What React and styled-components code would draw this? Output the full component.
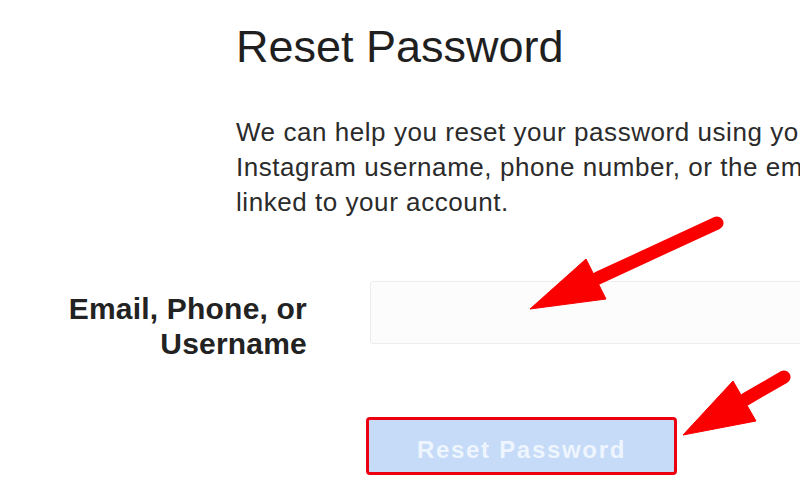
import React from 'react';
import styled, {createGlobalStyle} from 'styled-components';

const GlobalStyle = createGlobalStyle`
    html, body {
        margin: 0;
        padding: 0;
        background: #ffffff;
        overflow: hidden;
    }

    body {
        font-family: "Liberation Sans", Arial, Helvetica, sans-serif;
        color: #262626;
    }
`;

const Page = styled.div`
    position: relative;
    width: 800px;
    height: 489px;
    overflow: hidden;
    background: #ffffff;
`;

const Header = styled.header`
    margin-left: 236px;
    padding-top: 21px;
`;

const Title = styled.h1`
    margin: 0;
    font-size: 45px;
    font-weight: 400;
    line-height: 52px;
    color: #1f1f1f;
`;

const Intro = styled.p`
    margin: 42px 0 0;
    font-size: 26px;
    line-height: 35px;
    letter-spacing: 0.55px;
    white-space: nowrap;
    color: #2b2b2b;
`;

const Form = styled.form`
    margin-top: 61px;
    display: grid;
    grid-template-columns: 307px 480px;
    column-gap: 63px;
    row-gap: 59px;
    align-items: start;
`;

const Label = styled.label`
    margin-top: 10px;
    text-align: right;
    font-size: 30px;
    font-weight: 700;
    line-height: 35px;
    letter-spacing: 0.2px;
    color: #222222;
`;

const Input = styled.input`
    box-sizing: border-box;
    width: 100%;
    height: 63px;
    padding: 0 14px;
    border: 1px solid #ececec;
    border-radius: 3px;
    background: #fcfcfc;
    font: inherit;
    font-size: 24px;
    outline: none;
`;

const SubmitButton = styled.button`
    grid-column: 2;
    justify-self: start;
    margin-left: -1px;
    width: 305px;
    height: 52px;
    padding: 8px 0 0;
    border: none;
    border-radius: 1px;
    background: #c5dbf7;
    color: #eef5fe;
    font-family: "Liberation Sans", Arial, sans-serif;
    font-size: 24px;
    font-weight: 700;
    letter-spacing: 1.7px;
    outline: ${props => props.$highlight ? '3px solid #ec0010' : 'none'};
`;

const Annotations = styled.svg`
    position: absolute;
    left: 0;
    top: 0;
    pointer-events: none;
`;

const Arrow = ({tail, neck, tip, wingA, wingB}) => (
    <g fill="#fb0000" stroke="#fb0000">
        <line x1={tail[0]} y1={tail[1]} x2={neck[0]} y2={neck[1]}
              strokeWidth="13" strokeLinecap="round"/>
        <polygon points={`${tip.join(',')} ${wingA.join(',')} ${wingB.join(',')}`}
                 strokeWidth="1" strokeLinejoin="round"/>
    </g>
);

class App extends React.Component {
    render() {
        return (
            <Page>
                <GlobalStyle/>
                <Header>
                    <Title>Reset Password</Title>
                    <Intro>
                        We can help you reset your password using your<br/>
                        Instagram username, phone number, or the email address<br/>
                        linked to your account.
                    </Intro>
                </Header>
                <Form onSubmit={e => e.preventDefault()}>
                    <Label htmlFor="reset-login">Email, Phone, or<br/>Username</Label>
                    <Input id="reset-login" type="text"/>
                    <SubmitButton $highlight type="submit">Reset Password</SubmitButton>
                </Form>
                <Annotations width="800" height="489" viewBox="0 0 800 489">
                    <Arrow tail={[717, 223]} neck={[598, 278]} tip={[530, 309]}
                           wingA={[586, 259]} wingB={[606, 299]}/>
                    <Arrow tail={[784, 377]} neck={[746, 399]} tip={[683, 435]}
                           wingA={[733, 381]} wingB={[756, 421]}/>
                </Annotations>
            </Page>
        );
    }
}

export default App;
